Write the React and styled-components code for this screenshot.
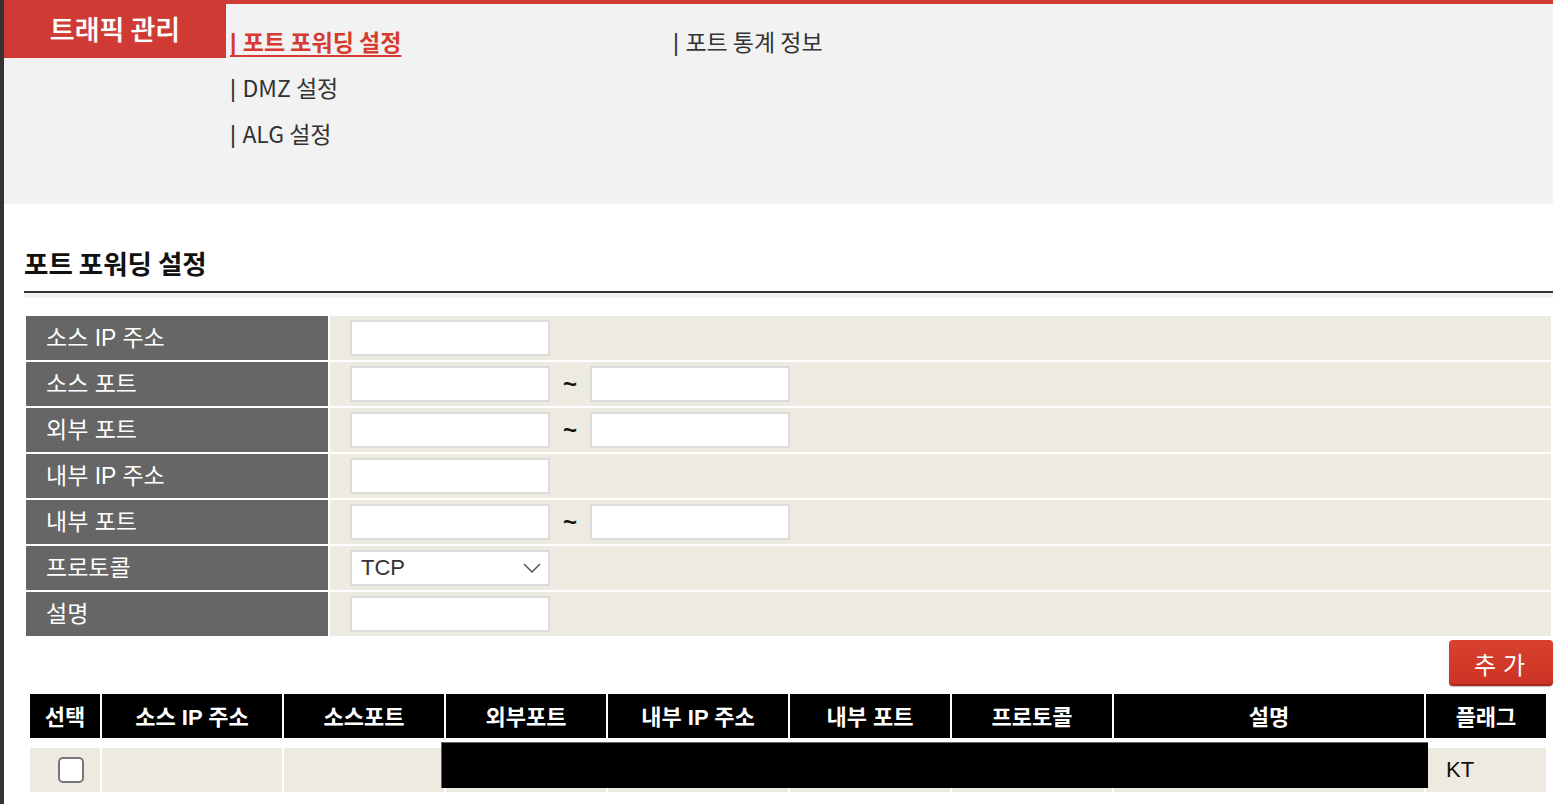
import React from "react";
import styled, { createGlobalStyle } from "styled-components";

const Global = createGlobalStyle`
  html, body { margin: 0; padding: 0; background: #fff; }
  body { font-family: "Liberation Sans", "Noto Sans CJK KR", sans-serif; color: #111; }
  * { box-sizing: border-box; }
`;

const Page = styled.div`
  display: flex;
  min-height: 804px;
`;

const LeftBar = styled.div`
  width: 4px;
  flex: none;
  background: #333;
`;

const Main = styled.div`
  width: 1549px;
  flex: none;
`;

const Header = styled.header`
  height: 204px;
  background: #f2f2f2;
  border-top: 4px solid #cf3b34;
  display: grid;
  grid-template-columns: 222px 4px 443px 1fr;
  align-items: start;
`;

const Tab = styled.div`
  margin-top: -4px;
  height: 58px;
  background: #cf3b34;
  color: #fff;
  font-family: "Noto Sans CJK KR", sans-serif;
  font-size: 27px;
  font-weight: 500;
  display: flex;
  align-items: center;
  justify-content: center;
  padding-bottom: 2px;
  text-shadow: 0 0 1px rgba(255, 255, 255, 0.6);
`;

const MenuCol = styled.nav`
  grid-column: ${(p) => p.$col};
  padding-top: 14px;
  display: flex;
  flex-direction: column;
`;

const MenuItem = styled.a`
  font-family: "Noto Sans CJK KR", sans-serif;
  font-size: 23px;
  line-height: 46px;
  height: 46px;
  color: ${(p) => (p.$active ? "#d53b30" : "#333")};
  font-weight: ${(p) => (p.$active ? 700 : 400)};
  text-decoration: ${(p) => (p.$active ? "underline" : "none")};
  text-decoration-skip-ink: none;
  text-underline-offset: 4px;
  text-decoration-thickness: 2px;
  white-space: pre;
  cursor: pointer;
`;

const Pipe = styled.span`
  font-family: "Liberation Sans", sans-serif;
`;

const Content = styled.section`
  padding-left: 20px;
`;

const Title = styled.h2`
  margin: 44px 0 0;
  font-family: "Noto Sans CJK KR", sans-serif;
  font-size: 26.5px;
  line-height: 30px;
  font-weight: 700;
  color: #111;
`;

const TitleRule = styled.div`
  margin-top: 13px;
  border-top: 2px solid #333;
  height: 7px;
  border-bottom: 5px solid #f2f2f2;
`;

const Form = styled.div`
  margin: 18px 2px 0;
  display: grid;
  grid-template-columns: 302px 1fr;
  row-gap: 2px;
  column-gap: 2px;
`;

const Label = styled.div`
  height: 44px;
  background: #666;
  color: #fff;
  font-size: 23px;
  padding: 0 0 4px 20px;
  display: flex;
  align-items: center;
`;

const Value = styled.div`
  height: 44px;
  background: #edeae2;
  padding-left: 20px;
  display: flex;
  align-items: center;
`;

const TextInput = styled.input`
  width: 200px;
  height: 36px;
  border: 2px solid #dcdcdc;
  background: #fff;
  font-size: 18px;
  padding: 0 8px;
  outline: none;
`;

const Tilde = styled.span`
  width: 40px;
  text-align: center;
  font-size: 24px;
  font-weight: 700;
  color: #111;
`;

const SelectBox = styled.div`
  width: 200px;
  height: 36px;
  border: 2px solid #dcdcdc;
  background: #fff;
  display: flex;
  align-items: center;
  justify-content: space-between;
  padding: 0 6px 0 9px;
  font-size: 22px;
  color: #333;
`;

const ButtonRow = styled.div`
  display: flex;
  justify-content: flex-end;
  margin-top: 4px;
`;

const AddButton = styled.button`
  width: 104px;
  height: 46px;
  border: none;
  border-radius: 4px;
  background: linear-gradient(#d8412f, #cc3324);
  box-shadow: inset 0 -2px 0 rgba(0, 0, 0, 0.15), 0 1px 1px rgba(0, 0, 0, 0.25);
  color: #fff;
  font-family: "Noto Sans CJK KR", sans-serif;
  font-size: 24px;
  letter-spacing: 7px;
  padding-left: 10px;
  cursor: pointer;
`;

const Table = styled.div`
  margin: 8px 7px 0 6px;
`;

const COLS = "70px 180px 160px 160px 180px 160px 160px 310px 120px";

const HeadRow = styled.div`
  display: grid;
  grid-template-columns: ${COLS};
  column-gap: 2px;
`;

const HeadCell = styled.div`
  height: 44px;
  background: #000;
  color: #fff;
  font-family: "Liberation Sans", "Noto Sans CJK KR", sans-serif;
  font-weight: 700;
  font-size: 22px;
  padding-bottom: 3px;
  display: flex;
  align-items: center;
  justify-content: center;
`;

const DataRow = styled.div`
  position: relative;
  margin-top: 10px;
  display: grid;
  grid-template-columns: ${COLS};
  column-gap: 2px;
`;

const DataCell = styled.div`
  height: 44px;
  background: #edeae2;
  font-size: 22px;
  color: #111;
  display: flex;
  align-items: center;
  justify-content: ${(p) => (p.$center ? "center" : "flex-start")};
  padding-left: ${(p) => (p.$center ? "0" : "20px")};
`;

const Check = styled.input`
  appearance: none;
  width: 26px;
  height: 26px;
  margin: 0 0 0 12px;
  border: 2px solid #777;
  border-radius: 5px;
  background: #fff;
`;

const Redaction = styled.div`
  position: absolute;
  left: 411px;
  top: -6px;
  width: 987px;
  height: 46px;
  background: #000;
  border-top: 1px solid #666;
  border-left: 1px solid #666;
`;

const Chevron = () => (
  <svg width="20" height="12" viewBox="0 0 20 12">
    <polyline points="2,2 10,10 18,2" fill="none" stroke="#555" strokeWidth="1.5" />
  </svg>
);

const fields = [
  { label: "소스 IP 주소", range: false },
  { label: "소스 포트", range: true },
  { label: "외부 포트", range: true },
  { label: "내부 IP 주소", range: false },
  { label: "내부 포트", range: true },
  { label: "프로토콜", select: true },
  { label: "설명", range: false },
];

const heads = ["선택", "소스 IP 주소", "소스포트", "외부포트", "내부 IP 주소", "내부 포트", "프로토콜", "설명", "플래그"];

const Item = ({ active, children }) => (
  <MenuItem $active={active}>
    <Pipe>{"| "}</Pipe>
    {children}
  </MenuItem>
);

export default function App() {
  return (
    <>
      <Global />
      <Page>
        <LeftBar />
        <Main>
          <Header>
            <Tab>트래픽 관리</Tab>
            <MenuCol $col={3}>
              <Item active>포트 포워딩 설정</Item>
              <Item>DMZ 설정</Item>
              <Item>ALG 설정</Item>
            </MenuCol>
            <MenuCol $col={4}>
              <Item>포트 통계 정보</Item>
            </MenuCol>
          </Header>
          <Content>
            <Title>포트 포워딩 설정</Title>
            <TitleRule />
            <Form>
              {fields.map((f) => (
                <React.Fragment key={f.label}>
                  <Label>{f.label}</Label>
                  <Value>
                    {f.select ? (
                      <SelectBox>
                        <span>TCP</span>
                        <Chevron />
                      </SelectBox>
                    ) : (
                      <>
                        <TextInput />
                        {f.range && (
                          <>
                            <Tilde>~</Tilde>
                            <TextInput />
                          </>
                        )}
                      </>
                    )}
                  </Value>
                </React.Fragment>
              ))}
            </Form>
            <ButtonRow>
              <AddButton>추가</AddButton>
            </ButtonRow>
            <Table>
              <HeadRow>
                {heads.map((h) => (
                  <HeadCell key={h}>{h}</HeadCell>
                ))}
              </HeadRow>
              <DataRow>
                <DataCell $center>
                  <Check type="checkbox" />
                </DataCell>
                <DataCell />
                <DataCell />
                <DataCell />
                <DataCell />
                <DataCell />
                <DataCell />
                <DataCell />
                <DataCell>KT</DataCell>
                <Redaction />
              </DataRow>
            </Table>
          </Content>
        </Main>
      </Page>
    </>
  );
}
